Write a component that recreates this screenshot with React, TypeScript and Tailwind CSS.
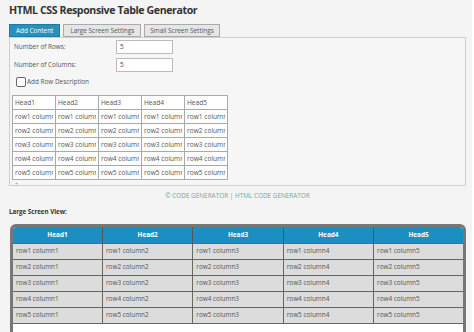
import React from 'react';

const ROWS = [1, 2, 3, 4, 5];
const COLS = [1, 2, 3, 4, 5];

const App = () => {
  return (
    <div className="w-[474px] h-[332px] overflow-hidden bg-white" style={{ fontFamily: '"Open Sans", sans-serif' }}>
      <div className="w-[472px] h-full bg-[#f4f4f4] pl-[9px] pr-[6px]">
        <h1 className="pt-[3px] text-[10.6px] leading-[14px] font-bold tracking-[-0.4px] text-[#333]">HTML CSS Responsive Table Generator</h1>

        {/* tabs */}
        <div className="mt-[7px] flex gap-[3px] text-[6.4px] leading-[11px]">
          <div className="h-[13px] px-[6px] bg-[#2a8fbd] border border-[#1d7aa5] text-white">Add Content</div>
          <div className="h-[13px] px-[6px] bg-[#e6e6e6] border border-[#aaa] text-[#555]">Large Screen Settings</div>
          <div className="h-[13px] px-[5px] bg-[#e6e6e6] border border-[#aaa] text-[#555]">Small Screen Settings</div>
        </div>

        {/* panel */}
        <div className="h-[149px] border border-[#cfcfcf] bg-[#f6f6f6] px-[1px] pt-[2px] text-[6.4px] text-[#555]">
          <div className="flex items-center h-[14px]">
            <span className="w-[105px] pl-[3px]">Number of Rows:</span>
            <div className="w-[57px] h-[14px] bg-white border border-[#bbb] pl-[3px] leading-[12px] text-[#444]">5</div>
          </div>
          <div className="flex items-center h-[14px] mt-[4px]">
            <span className="w-[105px] pl-[3px]">Number of Columns:</span>
            <div className="w-[57px] h-[14px] bg-white border border-[#bbb] pl-[3px] leading-[12px] text-[#444]">5</div>
          </div>
          <div className="flex items-center mt-[4px] ml-[5px] h-[11px]">
            <div className="w-[10px] h-[10px] border border-[#666] rounded-[2px] bg-white" />
            <span className="ml-[1px]">Add Row Description</span>
          </div>

          <table className="mt-[8px] ml-[1px] border-collapse bg-white text-[6.6px] text-[#555] table-fixed">
            <tbody>
              <tr>
                {COLS.map((c) => (
                  <td key={c} className="border border-[#aaa] h-[14px] w-[43px] p-0 leading-[12px]">
                    <div className="w-[40px] pl-[2px] overflow-hidden whitespace-nowrap">Head{c}</div>
                  </td>
                ))}
              </tr>
              {ROWS.map((r) => (
                <tr key={r}>
                  {COLS.map((c) => (
                    <td key={c} className="border border-[#aaa] h-[14px] w-[43px] p-0 leading-[12px]">
                      <div className="w-[40px] pl-[2px] overflow-hidden whitespace-nowrap">row{r} column{c}</div>
                    </td>
                  ))}
                </tr>
              ))}
            </tbody>
          </table>
          <div className="text-[5px] leading-[6px] text-[#999] ml-[4px] mt-[1px]">+</div>
        </div>

        <div className="mt-[5px] text-center text-[6.4px] leading-[10px] text-[#78a398]">© CODE GENERATOR | HTML CODE GENERATOR</div>

        <div className="mt-[6px] text-[6.2px] leading-[10px] font-bold text-[#333]">Large Screen View:</div>

        {/* preview */}
        <div className="mt-[7px] ml-[1px] w-[456px] h-[120px] border-[3px] border-[#777] rounded-t-[6px] bg-white overflow-hidden">
          <table className="w-full border-collapse text-[6.4px]">
            <thead>
              <tr className="bg-[#1b8fc2]">
                {COLS.map((c) => (
                  <th key={c} className="h-[16px] border-x border-[#555] first:border-l-0 last:border-r-0 text-white font-bold text-center">
                    Head{c}
                  </th>
                ))}
              </tr>
            </thead>
            <tbody>
              {ROWS.map((r) => (
                <tr key={r} className="bg-[#dcdcdc]">
                  {COLS.map((c) => (
                    <td key={c} className="h-[16px] border border-[#666] first:border-l-0 last:border-r-0 px-[3px] text-[#555] whitespace-nowrap">
                      row{r} column{c}
                    </td>
                  ))}
                </tr>
              ))}
            </tbody>
          </table>
        </div>
      </div>
    </div>
  );
};

export default App;
